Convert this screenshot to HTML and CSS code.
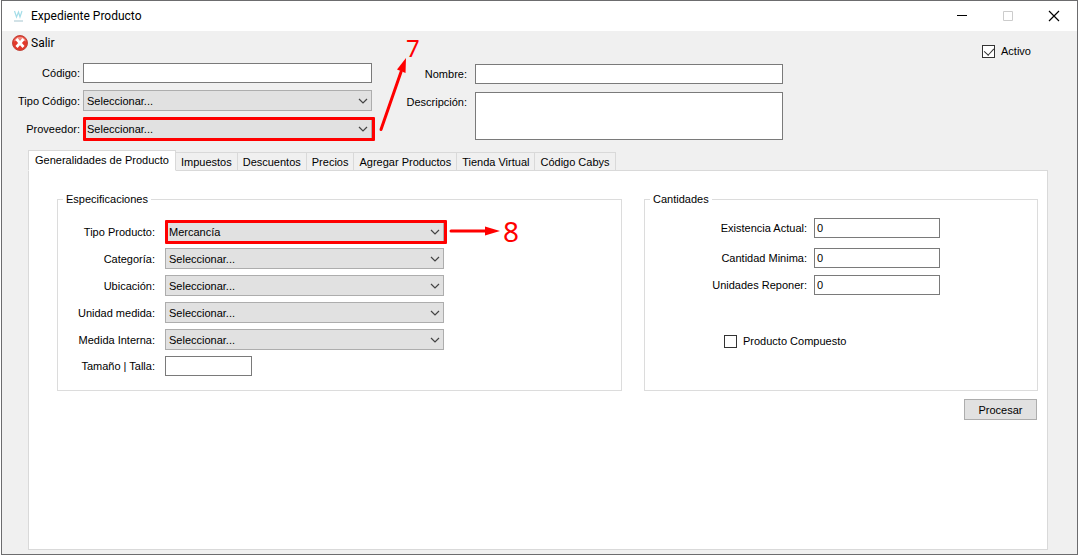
FILE: index.html
```html
<!DOCTYPE html>
<html lang="es">
<head>
<meta charset="utf-8">
<meta name="viewport" content="width=device-width, initial-scale=1">
<title>Expediente Producto</title>
<link rel="stylesheet" href="styles.css">
</head>
<body>
<div class="window">
  <header class="titlebar">
    <svg class="app-logo" viewBox="0 0 12 14" aria-hidden="true">
      <path d="M2.500 2 4.500 8 6.500 3 8 8 10 2" fill="none" stroke="#a4dde8" stroke-width="1.200"/>
      <path d="M2 12H11" stroke="#c3d9df" stroke-width="1.500"/>
    </svg>
    <h1 class="title">Expediente Producto</h1>
    <div class="window-buttons">
      <button type="button" class="window-button" aria-label="Minimizar"><svg viewBox="0 0 12 12"><path d="M1 5.500H11" stroke="#000"/></svg></button>
      <button type="button" class="window-button" aria-label="Maximizar" disabled><svg viewBox="0 0 12 12"><path d="M1.500 1.500H10.500V10.500H1.500Z" fill="none" stroke="#ccc"/></svg></button>
      <button type="button" class="window-button" aria-label="Cerrar"><svg viewBox="0 0 12 12"><path d="M1 1 11 11M11 1 1 11" fill="none" stroke="#000" stroke-width="1.200"/></svg></button>
    </div>
  </header>

  <main class="client">
    <section class="head">
      <div class="head-main">
        <button type="button" class="exit">
          <svg class="exit-icon" viewBox="0 0 16 16" aria-hidden="true">
            <circle cx="8" cy="8" r="7.500" fill="#e2392b" stroke="#c0463c"/>
            <path d="M2 6.500A6.200 6.200 0 0 1 14 6.500Q8 3 2 6.500Z" fill="#f48a80"/>
            <path d="M4.500 4 11.500 12M11.500 4 4.500 12" stroke="#fff" stroke-width="2.800"/>
          </svg>
          <span>Salir</span>
        </button>
        <div class="form">
          <div class="fields fields-left">
            <label for="codigo">Código:</label>
            <input id="codigo" class="box" type="text">
            <label for="tipo-codigo">Tipo Código:</label>
            <div class="combo"><select id="tipo-codigo"><option>Seleccionar...</option></select><svg class="chevron" viewBox="0 0 10 6"><path d="M1 1 5 5 9 1"/></svg></div>
            <label for="proveedor">Proveedor:</label>
            <div class="combo marked"><select id="proveedor"><option>Seleccionar...</option></select><svg class="chevron" viewBox="0 0 10 6"><path d="M1 1 5 5 9 1"/></svg>
              <svg class="arrow arrow-up" viewBox="0 0 30 74" aria-hidden="true"><path d="M3 71.500 23 14" stroke="#f00" stroke-width="3" stroke-linecap="round"/><path d="M28 0 27.500 15 19 11.500Z" fill="#f00"/></svg>
              <span class="step step-seven">7</span>
            </div>
          </div>
          <div class="fields fields-right">
            <label for="nombre">Nombre:</label>
            <input id="nombre" class="box" type="text">
            <label for="descripcion">Descripción:</label>
            <textarea id="descripcion" class="box"></textarea>
          </div>
        </div>
      </div>
      <label class="check active-check"><input type="checkbox" checked>Activo</label>
    </section>

    <nav class="tabs" role="tablist">
      <button type="button" role="tab" aria-selected="true" class="tab selected">Generalidades de Producto</button>
      <button type="button" role="tab" class="tab">Impuestos</button>
      <button type="button" role="tab" class="tab">Descuentos</button>
      <button type="button" role="tab" class="tab">Precios</button>
      <button type="button" role="tab" class="tab">Agregar Productos</button>
      <button type="button" role="tab" class="tab">Tienda Virtual</button>
      <button type="button" role="tab" class="tab">Código Cabys</button>
    </nav>

    <section class="panel" role="tabpanel">
      <div class="groups">
        <fieldset class="group specs">
          <legend>Especificaciones</legend>
          <div class="fields fields-specs">
            <label for="tipo-producto">Tipo Producto:</label>
            <div class="combo marked"><select id="tipo-producto"><option>Mercancía</option></select><svg class="chevron" viewBox="0 0 10 6"><path d="M1 1 5 5 9 1"/></svg>
              <svg class="arrow arrow-right" viewBox="0 0 52 10" aria-hidden="true"><path d="M2 5H38" stroke="#f00" stroke-width="3" stroke-linecap="round"/><path d="M36 .500 51 5 36 9.500Z" fill="#f00"/></svg>
              <span class="step step-eight">8</span>
            </div>
            <label for="categoria">Categoría:</label>
            <div class="combo"><select id="categoria"><option>Seleccionar...</option></select><svg class="chevron" viewBox="0 0 10 6"><path d="M1 1 5 5 9 1"/></svg></div>
            <label for="ubicacion">Ubicación:</label>
            <div class="combo"><select id="ubicacion"><option>Seleccionar...</option></select><svg class="chevron" viewBox="0 0 10 6"><path d="M1 1 5 5 9 1"/></svg></div>
            <label for="unidad">Unidad medida:</label>
            <div class="combo"><select id="unidad"><option>Seleccionar...</option></select><svg class="chevron" viewBox="0 0 10 6"><path d="M1 1 5 5 9 1"/></svg></div>
            <label for="medida">Medida Interna:</label>
            <div class="combo"><select id="medida"><option>Seleccionar...</option></select><svg class="chevron" viewBox="0 0 10 6"><path d="M1 1 5 5 9 1"/></svg></div>
            <label for="talla">Tamaño | Talla:</label>
            <input id="talla" class="box size-box" type="text">
          </div>
        </fieldset>
        <fieldset class="group amounts">
          <legend>Cantidades</legend>
          <div class="fields fields-amounts">
            <label for="existencia">Existencia Actual:</label>
            <input id="existencia" class="box" type="text" value="0">
            <label for="minima">Cantidad Minima:</label>
            <input id="minima" class="box" type="text" value="0">
            <label for="reponer">Unidades Reponer:</label>
            <input id="reponer" class="box" type="text" value="0">
          </div>
          <label class="check compound-check"><input type="checkbox">Producto Compuesto</label>
        </fieldset>
      </div>
      <button type="button" class="process">Procesar</button>
    </section>
  </main>
</div>
</body>
</html>
```

FILE: styles.css
```css
* {
  box-sizing: border-box;
}

body {
  margin: 0;
  padding: 0 0 2px 1px;
  min-height: 100vh;
  display: flex;
  background: #fff;
  color: #000;
  font: 11px/14px "Liberation Sans", Arial, sans-serif;
}

button,
input,
select,
textarea {
  font: inherit;
  color: inherit;
  margin: 0;
}

.window {
  flex: 1;
  min-width: 0;
  display: flex;
  flex-direction: column;
  border: 1px solid #6c6c6e;
  background: #f0f0f0;
}

/* Title bar */
.titlebar {
  display: flex;
  align-items: center;
  height: 30px;
  padding-left: 10px;
  background: #fff;
}

.app-logo {
  width: 12px;
  height: 14px;
  margin-right: 7px;
}

.title {
  flex: 1;
  margin: 0;
  font: 12px/16px Roboto, sans-serif;
}

.window-buttons {
  display: flex;
}

.window-button {
  width: 46px;
  height: 30px;
  padding: 0;
  border: 0;
  background: none;
}

.window-button svg {
  display: block;
  width: 12px;
  height: 12px;
  margin: 0 auto;
}

.client {
  flex: 1;
  display: flex;
  flex-direction: column;
}

/* Record header */
.head {
  display: flex;
  padding-bottom: 10px;
}

.head-main {
  flex: 1;
}

.exit {
  display: flex;
  align-items: center;
  gap: 3px;
  height: 24px;
  margin-left: 10px;
  padding: 0;
  border: 0;
  background: none;
  font: 12px/16px Roboto, sans-serif;
}

.exit-icon {
  width: 16px;
  height: 16px;
}

.form {
  display: grid;
  grid-template-columns: 370fr 411fr 199fr;
  padding-top: 8px;
}

.fields {
  display: grid;
  align-items: center;
  align-content: start;
}

.fields label {
  text-align: right;
  white-space: nowrap;
}

.fields-left {
  grid-template-columns: 78px 1fr;
  gap: 7px 3px;
}

.fields-right {
  grid-template-columns: 95px 1fr;
  gap: 8px;
  padding-top: 1px;
}

.fields-right label {
  align-self: start;
  padding-top: 3px;
}

.box {
  display: block;
  width: 100%;
  height: 20px;
  padding: 0 2px;
  border: 1px solid #7a7a7a;
  border-radius: 0;
  background: #fff;
}

textarea.box {
  height: 48px;
  resize: none;
}

.combo {
  position: relative;
}

.combo select {
  appearance: none;
  display: block;
  width: 100%;
  height: 21px;
  padding: 0 20px 0 3px;
  border: 1px solid #adadad;
  border-radius: 0;
  background: #e1e1e1;
}

.chevron {
  position: absolute;
  top: 8px;
  right: 4px;
  width: 10px;
  height: 6px;
  fill: none;
  stroke: #444;
  stroke-width: 1.2;
  pointer-events: none;
}

.check {
  display: flex;
  align-items: center;
  gap: 6px;
  white-space: nowrap;
}

.check input {
  appearance: none;
  width: 13px;
  height: 13px;
  border: 1px solid #333;
  background: #fff;
}

.check input:checked {
  position: relative;
}

.check input:checked::after {
  content: "";
  position: absolute;
  top: 0;
  left: 3px;
  width: 5px;
  height: 8px;
  border: solid #333;
  border-width: 0 1px 1px 0;
  transform: rotate(42deg);
}

.active-check {
  align-self: flex-start;
  width: 95px;
  padding-top: 13px;
}

/* Step callouts */
.marked::after {
  content: "";
  position: absolute;
  inset: -1px -3px -2px 0;
  border: 3px solid #f00;
  border-radius: 1px;
  pointer-events: none;
}

.arrow {
  position: absolute;
  left: 100%;
  z-index: 1;
}

.arrow-up {
  top: -60px;
  width: 30px;
  height: 74px;
  margin-left: 6px;
}

.arrow-right {
  top: 5px;
  width: 52px;
  height: 10px;
  margin-left: 5px;
}

.step {
  position: absolute;
  left: 100%;
  z-index: 1;
  color: #f00;
  font-family: "Noto Sans", sans-serif;
}

.step-seven {
  top: -82px;
  margin-left: 34px;
  font-size: 24px;
  line-height: 24px;
}

.step-eight {
  top: -4px;
  margin-left: 59px;
  font-size: 28px;
  line-height: 28px;
}

/* Tabs */
.tabs {
  display: flex;
  align-items: flex-end;
  padding-left: 26px;
}

.tab {
  height: 19px;
  margin-bottom: -1px;
  padding: 0 5px;
  border: 1px solid #d9d9d9;
  border-left-width: 0;
  background: #f0f0f0;
  white-space: nowrap;
}

.tab.selected {
  position: relative;
  height: 21px;
  padding: 0 6px 2px;
  border-left-width: 1px;
  border-bottom-color: #fff;
  background: #fff;
}

.panel {
  flex: 1;
  display: flex;
  flex-direction: column;
  margin: 0 29px 4px 26px;
  padding: 21px 9px 21px 28px;
  border: 1px solid #d9d9d9;
  background: #fff;
}

.groups {
  display: grid;
  grid-template-columns: 565fr 394fr;
  gap: 22px;
}

.group {
  min-width: 0;
  margin: 0;
  padding: 0;
  border: 1px solid #dcdcdc;
}

.group legend {
  margin-left: 5px;
  padding: 0 3px;
}

.fields-specs {
  grid-template-columns: 97px 279fr 167fr;
  gap: 6px 10px;
  padding: 15px 0 14px;
}

.fields-specs label {
  grid-column: 1;
}

.size-box {
  width: 87px;
}

.fields-amounts {
  grid-template-columns: 162px 126fr 90fr;
  grid-template-rows: 23px 20px 20px;
  gap: 7px;
  align-items: start;
  padding-top: 12px;
}

.fields-amounts label {
  grid-column: 1;
  padding-top: 3px;
}

.compound-check {
  margin: 39px 0 0 79px;
}

.process {
  align-self: flex-end;
  width: 73px;
  height: 21px;
  margin: 8px 1px 0 0;
  padding: 0;
  border: 1px solid #adadad;
  background: #e1e1e1;
}
```
